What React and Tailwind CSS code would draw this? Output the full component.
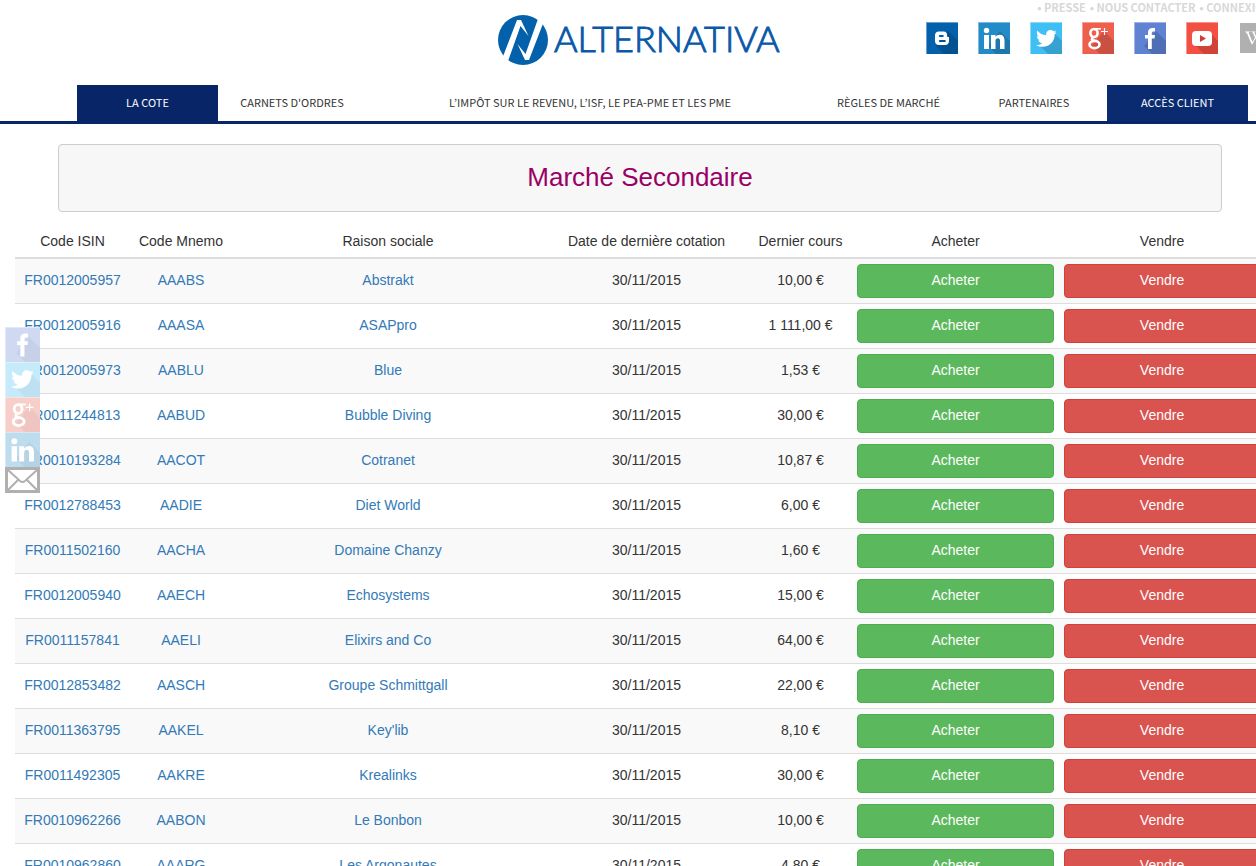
import { FaTwitter, FaWikipediaW } from "react-icons/fa";

const Blogger = () => (
  <svg viewBox="0 0 32 32" className="size-full">
    <path
      fillRule="evenodd"
      fill="#fff"
      d="M13 9.500h4.500c2.500 0 3.500 1.500 3.500 3.500 0 1.500.3 2 1.200 2 .6 0 .8.400.8 1v3c0 2.500-1.500 4-4 4h-6c-2.500 0-4-1.500-4-4v-5.500c0-2.500 1.500-4 4-4zm.8 3.500a1 1 0 0 0 0 2h3a1 1 0 0 0 0-2zm0 5a1 1 0 0 0 0 2h5a1 1 0 0 0 0-2z"
    />
  </svg>
);

const GooglePlus = () => (
  <svg viewBox="0 0 32 32" className="size-full" fill="none" stroke="#fff">
    <ellipse cx="12" cy="11" rx="3.600" ry="4" strokeWidth="2.600" />
    <path d="M12 6.800h7" strokeWidth="1.600" />
    <path d="M12 15c-3 1.500-3 3 .5 3.500" strokeWidth="2.400" />
    <ellipse cx="12.500" cy="22.500" rx="5" ry="3.600" strokeWidth="2.600" />
    <path d="M22.500 6v7M19 9.500h7" strokeWidth="1.200" />
  </svg>
);

const Facebook = () => (
  <svg viewBox="0 0 32 32" className="size-full">
    <path
      fill="#fff"
      d="M14 27V16.500h-3V13h3v-2.500C14 7.500 15.700 6 18.500 6H21v3.500h-1.500c-1.300 0-1.700.6-1.700 1.700V13H21l-.4 3.500h-2.800V27z"
    />
  </svg>
);

const Linkedin = () => (
  <svg viewBox="0 0 32 32" className="size-full" fill="#fff">
    <circle cx="8.500" cy="8.500" r="2.700" />
    <path d="M6 13h5v14H6z" />
    <path d="M13 13h4.500v2c1-1.500 2.400-2.300 4.300-2.300 3.200 0 4.700 2 4.700 5.600V27H22v-8c0-1.800-.6-2.800-2.200-2.800-1.500 0-2.300 1.200-2.300 3.100V27H13z" />
  </svg>
);

const Twitter = () => <FaTwitter className="size-[65%] m-auto text-white" />;

const Youtube = () => (
  <svg viewBox="0 0 32 32" className="size-full">
    <rect x="6" y="9" width="20" height="15" rx="4" fill="#fff" />
    <path d="M14 13v7l6-3.500z" fill="#c93f37" />
  </svg>
);

const socials = [
  { name: "Blog", bg: "bg-[#0360ab]", icon: <Blogger /> },
  { name: "LinkedIn", bg: "bg-[#238cc8]", icon: <Linkedin /> },
  { name: "Twitter", bg: "bg-[#40bff5]", icon: <Twitter /> },
  { name: "Google+", bg: "bg-[#ee5f4e]", icon: <GooglePlus /> },
  { name: "Facebook", bg: "bg-[#5f82d3]", icon: <Facebook /> },
  { name: "YouTube", bg: "bg-[#f44f43]", icon: <Youtube /> },
];

const shares = [
  { name: "Partager sur Facebook", bg: "bg-[#cfd9f1]", icon: <Facebook /> },
  { name: "Partager sur Twitter", bg: "bg-[#c5ebfb]", icon: <Twitter /> },
  { name: "Partager sur Google+", bg: "bg-[#f8cec9]", icon: <GooglePlus /> },
  { name: "Partager sur LinkedIn", bg: "bg-[#bddcee]", icon: <Linkedin /> },
];

const menu = [
  { label: "LA COTE", style: "w-[141px] bg-[#082567] text-white" },
  { label: "CARNETS D'ORDRES", style: "w-[148px] text-[#333]" },
  { label: "L’IMPÔT SUR LE REVENU, L’ISF, LE PEA-PME ET LES PME", style: "flex-1 text-[#333]" },
  { label: "RÈGLES DE MARCHÉ", style: "w-[149px] text-[#333]" },
  { label: "PARTENAIRES", style: "w-[142px] mr-[2px] text-[#333]" },
  { label: "ACCÈS CLIENT", style: "w-[141px] bg-[#0a2b70] text-white" },
];

const columns = [
  { label: "Code ISIN", width: "w-[115px]" },
  { label: "Code Mnemo", width: "w-[102px]" },
  { label: "Raison sociale", width: "w-[312px]" },
  { label: "Date de dernière cotation", width: "w-[205px]" },
  { label: "Dernier cours", width: "w-[103px]" },
  { label: "Acheter", width: "w-[207px]" },
  { label: "Vendre", width: "w-[206px]" },
];

const quotes = [
  { isin: "FR0012005957", mnemo: "AAABS", name: "Abstrakt", price: "10,00 €" },
  { isin: "FR0012005916", mnemo: "AAASA", name: "ASAPpro", price: "1 111,00 €" },
  { isin: "FR0012005973", mnemo: "AABLU", name: "Blue", price: "1,53 €" },
  { isin: "FR0011244813", mnemo: "AABUD", name: "Bubble Diving", price: "30,00 €" },
  { isin: "FR0010193284", mnemo: "AACOT", name: "Cotranet", price: "10,87 €" },
  { isin: "FR0012788453", mnemo: "AADIE", name: "Diet World", price: "6,00 €" },
  { isin: "FR0011502160", mnemo: "AACHA", name: "Domaine Chanzy", price: "1,60 €" },
  { isin: "FR0012005940", mnemo: "AAECH", name: "Echosystems", price: "15,00 €" },
  { isin: "FR0011157841", mnemo: "AAELI", name: "Elixirs and Co", price: "64,00 €" },
  { isin: "FR0012853482", mnemo: "AASCH", name: "Groupe Schmittgall", price: "22,00 €" },
  { isin: "FR0011363795", mnemo: "AAKEL", name: "Key'lib", price: "8,10 €" },
  { isin: "FR0011492305", mnemo: "AAKRE", name: "Krealinks", price: "30,00 €" },
  { isin: "FR0010962266", mnemo: "AABON", name: "Le Bonbon", price: "10,00 €" },
  { isin: "FR0010962860", mnemo: "AAARG", name: "Les Argonautes", price: "4,80 €" },
];

// Square tile with the diagonal shadow behind its glyph
const Tile = ({ name, bg, size, shadow, children }) => (
  <a href="#" aria-label={name} className={`grid shrink-0 ${size} ${bg}`}>
    <svg viewBox="0 0 32 32" className="size-full col-start-1 row-start-1">
      <path d="M10 24 22 9l10 10v13H18z" fill="#000" opacity={shadow} />
      <path d="M0 .5h32M.5 0v32" stroke="#fff" opacity=".4" />
    </svg>
    <span className="size-full col-start-1 row-start-1 flex">{children}</span>
  </a>
);

const Logo = () => (
  <a href="#" aria-label="Alternativa" className="block mt-[14px]">
    <svg viewBox="0 0 284 52" className="w-[284px] h-[52px]">
      <circle cx="25" cy="26" r="25" fill="#0360ab" />
      <g fill="#fff">
        <path d="M4 45 19 6h4l7.500 16-8-10L9 50z" />
        <path d="M46 7 31 46h-4l-7.500-16 8 10L41 2z" />
      </g>
      <text x="56" y="38" fontSize="36" fill="#0a58a8" stroke="#0a58a8" strokeWidth="1" className="font-light font-['Lato',sans-serif]">
        ALTERNATIVA
      </text>
    </svg>
  </a>
);

const Header = () => (
  <header>
    <div className="grid grid-cols-[1fr_auto_1fr] h-[85px]">
      <div />
      <Logo />
      <div className="flex flex-col items-end pr-[10px]">
        <div className="flex gap-1 h-[22px] -mr-[2px] leading-[14px] text-[11px] font-bold text-[#d8d8d8] whitespace-nowrap font-['Noto_Sans_CJK_JP',sans-serif]">
          <a href="#">• PRESSE</a>
          <a href="#">• NOUS CONTACTER</a>
          <a href="#">• CONNEXION</a>
        </div>
        <div className="flex items-center gap-5">
          {socials.map(s => (
            <Tile key={s.name} name={s.name} bg={s.bg} size="size-8" shadow=".15">
              {s.icon}
            </Tile>
          ))}
          <a href="#" aria-label="Wikipedia" className="flex size-[30px] ml-[2px] bg-[#b0b0b0] text-white">
            <FaWikipediaW className="size-5 m-auto" />
          </a>
        </div>
      </div>
    </div>
    <nav className="flex pl-[77px] pr-8 border-b-3 border-[#082567] text-[11px] font-['Noto_Sans_CJK_JP',sans-serif]">
      {menu.map(m => (
        <a key={m.label} href="#" className={`pb-[2px] leading-[34px] text-center whitespace-nowrap ${m.style}`}>
          {m.label}
        </a>
      ))}
    </nav>
  </header>
);

const QuoteTable = () => (
  <table className="w-full table-fixed border-separate border-spacing-0 text-center">
    <thead>
      <tr>
        {columns.map(c => (
          <th key={c.label} className={`${c.width} px-[5px] pt-1 pb-[6px] font-normal border-b-2 border-[#ddd]`}>
            {c.label}
          </th>
        ))}
      </tr>
    </thead>
    <tbody>
      {quotes.map(q => (
        <tr key={q.isin} className="odd:bg-[#f9f9f9] *:p-[5px] *:align-top *:leading-8 *:border-b *:border-[#ddd]">
          <td><a href="#" className="text-[#337ab7]">{q.isin}</a></td>
          <td><a href="#" className="text-[#337ab7]">{q.mnemo}</a></td>
          <td><a href="#" className="text-[#337ab7]">{q.name}</a></td>
          <td>30/11/2015</td>
          <td>{q.price}</td>
          <td>
            <button className="block w-full pt-[5px] pb-[7px] leading-5 rounded-sm border border-[#4cae4c] bg-[#5cb85c] text-white">
              Acheter
            </button>
          </td>
          <td>
            <button className="block w-full pt-[5px] pb-[7px] leading-5 rounded-sm border border-[#d43f3a] bg-[#d9534f] text-white">
              Vendre
            </button>
          </td>
        </tr>
      ))}
    </tbody>
  </table>
);

const ShareBar = () => (
  <div className="fixed left-[5px] top-[327px] flex flex-col">
    {shares.map(s => (
      <Tile key={s.name} name={s.name} bg={s.bg} size="size-[35px]" shadow=".04">
        {s.icon}
      </Tile>
    ))}
    <a href="#" aria-label="Envoyer par e-mail">
      <svg viewBox="0 0 35 26" className="block w-[35px] h-[26px]">
        <rect x="1.500" y="1.500" width="32" height="23" fill="#fff" stroke="#b0b0b0" strokeWidth="3" />
        <path d="M3 3l12 11q2.500 2 5 0L32 3M3 23l10-10M32 23 22 13" fill="none" stroke="#b0b0b0" strokeWidth="2" />
      </svg>
    </a>
  </div>
);

const App = () => (
  <div className="overflow-x-clip bg-white">
    <div className="min-w-[1280px] text-[14px] leading-5 text-[#333] font-['Liberation_Sans',Arial,sans-serif]">
      <Header />
      <main className="pt-5 px-[15px]">
        <div className="mx-[43px] mb-[15px] pt-[17px] pb-[19px] rounded-sm border border-[#ccc] bg-[#f7f7f7] text-center">
          <h1 className="text-[26px] leading-[30px] text-[#990066]">Marché Secondaire</h1>
        </div>
        <QuoteTable />
      </main>
      <ShareBar />
    </div>
  </div>
);

export default App;
